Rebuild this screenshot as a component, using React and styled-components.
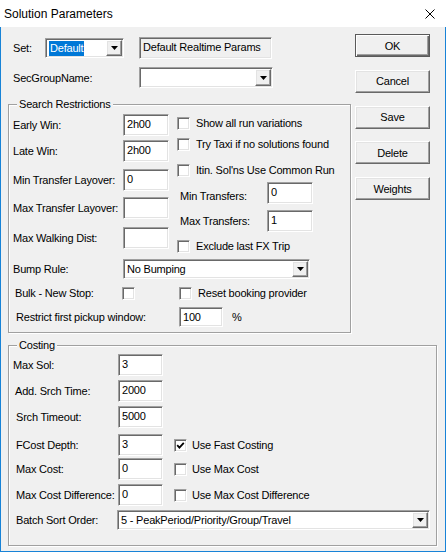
import React from 'react';
import styled, { createGlobalStyle, css } from 'styled-components';

const GlobalStyle = createGlobalStyle`
  html, body {
    margin: 0;
    padding: 0;
    background: #f0f0f0;
  }
  * {
    box-sizing: border-box;
  }
`;

const sunken = css`
  border: 1px solid;
  border-color: #a0a0a0 #ffffff #ffffff #a0a0a0;
  box-shadow: inset 1px 1px 0 #696969, inset -1px -1px 0 #e3e3e3;
`;

const raised = css`
  border: 1px solid;
  border-color: #ffffff #696969 #696969 #ffffff;
  box-shadow: inset -1px -1px 0 #a0a0a0, inset 1px 1px 0 #e3e3e3;
`;

const Window = styled.div`
  width: 446px;
  height: 552px;
  display: flex;
  flex-direction: column;
  background: #ffffff;
  font-family: 'Liberation Sans', Arial, sans-serif;
  font-size: 11px;
  letter-spacing: -0.2px;
  color: #000;
`;

const TitleBar = styled.div`
  height: 27px;
  flex-shrink: 0;
  display: flex;
  align-items: center;
  justify-content: space-between;
  padding: 0 11px 0 4px;
  background: #ffffff;
`;

const Title = styled.span`
  font-size: 12px;
  letter-spacing: 0;
`;

const Body = styled.div`
  flex: 1;
  display: flex;
  flex-direction: column;
  background: #f0f0f0;
  border: 1px solid #1883d7;
  border-top: none;
  padding: 7px 8px 0 7px;
`;

const TopArea = styled.div`
  display: flex;
  gap: 4px;
  align-items: flex-start;
`;

const LeftCol = styled.div`
  width: 343px;
  display: flex;
  flex-direction: column;
`;

const HeaderRows = styled.div`
  display: flex;
  flex-direction: column;
  padding-left: 5px;
`;

const ButtonCol = styled.div`
  display: flex;
  flex-direction: column;
  gap: 12.75px;
`;

const Button = styled.div`
  width: 75px;
  height: 23px;
  display: flex;
  align-items: center;
  justify-content: center;
  background: #f0f0f0;
  ${raised}
  ${p =>
    p.$default &&
    css`
      border: 1px solid #5a5a5a;
      box-shadow: inset 1px 1px 0 #ffffff, inset -1px -1px 0 #696969,
        inset -2px -2px 0 #a0a0a0;
    `}
`;

const Group = styled.div`
  position: relative;
  margin-top: ${p => p.$mt}px;
  border: 1px solid #a0a0a0;
  box-shadow: inset 1px 1px 0 #ffffff, 1px 1px 0 #ffffff;
  padding: ${p => p.$pad};
  display: flex;
  flex-direction: column;
`;

const Caption = styled.span`
  position: absolute;
  top: -7px;
  left: 8px;
  padding: 0 2px;
  line-height: 13px;
  background: #f0f0f0;
`;

const Columns = styled.div`
  display: flex;
  align-items: flex-start;
`;

const Column = styled.div`
  width: ${p => (p.$w ? `${p.$w}px` : 'auto')};
  display: flex;
  flex-direction: column;
`;

const Row = styled.div`
  display: flex;
  align-items: center;
  flex-shrink: 0;
  height: ${p => p.$h || 22}px;
  margin-top: ${p => p.$mt || 0}px;
`;

const Label = styled.span`
  width: ${p => p.$w}px;
  padding-left: ${p => p.$pl || 0}px;
  padding-top: ${p => p.$pt || 0}px;
  flex-shrink: 0;
  white-space: nowrap;
`;

const Edit = styled.div`
  width: ${p => p.$w || 46}px;
  height: ${p => p.$h || 22}px;
  flex-shrink: 0;
  ${sunken}
  background: ${p => (p.$gray ? '#f0f0f0' : '#ffffff')};
  padding: 2px 0 0 3px;
  line-height: 14px;
  white-space: nowrap;
  overflow: hidden;
`;

const Combo = styled.div`
  width: ${p => p.$w}px;
  height: ${p => p.$h || 21}px;
  flex-shrink: 0;
  display: flex;
  ${sunken}
  padding: 1px;
  background: #ffffff;
  margin-left: ${p => p.$ml || 0}px;
`;

const ComboText = styled.div`
  flex: 1;
  display: flex;
  align-items: center;
  padding-left: 2px;
  white-space: nowrap;
  overflow: hidden;
`;

const Selected = styled.span`
  background: #0078d7;
  color: #ffffff;
  padding: 1px 1px;
  line-height: 13px;
`;

const DropBtn = styled.div`
  width: 16px;
  display: flex;
  align-items: center;
  justify-content: center;
  background: #f0f0f0;
  ${raised}
`;

const CheckItem = styled.div`
  display: flex;
  align-items: center;
  margin-left: ${p => p.$ml || 0}px;
  white-space: nowrap;
`;

const Box = styled.span`
  width: 13px;
  height: 13px;
  flex-shrink: 0;
  display: flex;
  align-items: center;
  justify-content: center;
  ${sunken}
  background: #ffffff;
  margin-right: ${p => p.$gap || 6}px;
`;

const Percent = styled.span`
  margin-left: 9px;
`;

const Arrow = () => (
  <svg width="7" height="4" viewBox="0 0 7 4">
    <path d="M0 0H7L3.5 4Z" fill="#000" />
  </svg>
);

const DropDown = ({ w, h, ml, children }) => (
  <Combo $w={w} $h={h} $ml={ml}>
    <ComboText>{children}</ComboText>
    <DropBtn>
      <Arrow />
    </DropBtn>
  </Combo>
);

const Check = ({ label, checked, gap, ml }) => (
  <CheckItem $ml={ml}>
    <Box $gap={gap}>
      {checked && (
        <svg width="9" height="9" viewBox="0 0 9 9">
          <polyline points="1.2,4.2 3.4,6.6 7.8,1.8" fill="none" stroke="#000" strokeWidth="1.8" />
        </svg>
      )}
    </Box>
    {label}
  </CheckItem>
);

const costRows = [
  { label: 'Max Sol:', value: '3', mt: 0, pl: 0 },
  { label: 'Add. Srch Time:', value: '2000', mt: 4, pl: 2 },
  { label: 'Srch Timeout:', value: '5000', mt: 4, pl: 3 },
  { label: 'FCost Depth:', value: '3', mt: 6, pl: 3, check: 'Use Fast Costing', checked: true },
  { label: 'Max Cost:', value: '0', mt: 2, pl: 3, check: 'Use Max Cost' },
  { label: 'Max Cost Difference:', value: '0', mt: 4, pl: 3, check: 'Use Max Cost Difference' },
];

const leftFields = [
  { label: 'Early Win:', value: '2h00', mt: 0 },
  { label: 'Late Win:', value: '2h00', mt: 4 },
  { label: 'Min Transfer Layover:', value: '0', mt: 7 },
  { label: 'Max Transfer Layover:', value: '', mt: 6 },
  { label: 'Max Walking Dist:', value: '', mt: 8 },
];

export default function App() {
  return (
    <>
      <GlobalStyle />
      <Window>
        <TitleBar>
          <Title>Solution Parameters</Title>
          <svg width="10" height="10" viewBox="0 0 10 10">
            <path d="M0.5 0.5L9.5 9.5M9.5 0.5L0.5 9.5" stroke="#000" strokeWidth="1" />
          </svg>
        </TitleBar>
        <Body>
          <TopArea>
            <LeftCol>
              <HeaderRows>
                <Row $h={22} $mt={3}>
                  <Label $w={32}>Set:</Label>
                  <DropDown w={79} h={20}>
                    <Selected>Default</Selected>
                  </DropDown>
                  <Edit $w={133} $gray style={{ marginLeft: 15 }}>
                    Default Realtime Params
                  </Edit>
                </Row>
                <Row $h={21} $mt={8}>
                  <Label $w={126}>SecGroupName:</Label>
                  <DropDown w={134} h={21} />
                </Row>
              </HeaderRows>

              <Group $mt={16} $pad="9px 4px 4px 4px">
                <Caption>Search Restrictions</Caption>
                <Columns>
                  <Column $w={164}>
                    {leftFields.map(f => (
                      <Row key={f.label} $mt={f.mt}>
                        <Label $w={110}>{f.label}</Label>
                        <Edit>{f.value}</Edit>
                      </Row>
                    ))}
                  </Column>
                  <Column>
                    <Row $h={16} $mt={1}>
                      <Check label="Show all run variations" />
                    </Row>
                    <Row $h={16} $mt={5}>
                      <Check label="Try Taxi if no solutions found" />
                    </Row>
                    <Row $h={16} $mt={10}>
                      <Check label="Itin. Sol'ns Use Common Run" />
                    </Row>
                    <Row $mt={4}>
                      <Label $w={90} $pl={3} $pt={6}>Min Transfers:</Label>
                      <Edit>0</Edit>
                    </Row>
                    <Row $mt={6}>
                      <Label $w={90} $pl={3}>Max Transfers:</Label>
                      <Edit>1</Edit>
                    </Row>
                    <Row $h={16} $mt={6}>
                      <Check label="Exclude last FX Trip" />
                    </Row>
                  </Column>
                </Columns>
                <Row $h={21} $mt={4}>
                  <Label $w={110}>Bump Rule:</Label>
                  <DropDown w={187} h={20}>No Bumping</DropDown>
                </Row>
                <Row $h={16} $mt={6}>
                  <Label $w={109} $pl={2}>Bulk - New Stop:</Label>
                  <Check />
                  <Check ml={38} label="Reset booking provider" />
                </Row>
                <Row $mt={5}>
                  <Label $w={166} $pl={3}>Restrict first pickup window:</Label>
                  <Edit $w={44} $h={20}>100</Edit>
                  <Percent>%</Percent>
                </Row>
              </Group>
            </LeftCol>

            <ButtonCol>
              <Button $default>OK</Button>
              <Button>Cancel</Button>
              <Button>Save</Button>
              <Button>Delete</Button>
              <Button>Weights</Button>
            </ButtonCol>
          </TopArea>

          <Group $mt={12} $pad="8px 4px 15px 4px">
            <Caption>Costing</Caption>
            {costRows.map(r => (
              <Row key={r.label} $mt={r.mt}>
                <Label $w={105} $pl={r.pl}>{r.label}</Label>
                <Edit $w={45}>{r.value}</Edit>
                {r.check && <Check ml={11} gap={5} label={r.check} checked={r.checked} />}
              </Row>
            ))}
            <Row $h={20} $mt={4}>
              <Label $w={104} $pl={3}>Batch Sort Order:</Label>
              <DropDown w={313} h={20}>5 - PeakPeriod/Priority/Group/Travel</DropDown>
            </Row>
          </Group>
        </Body>
      </Window>
    </>
  );
}
